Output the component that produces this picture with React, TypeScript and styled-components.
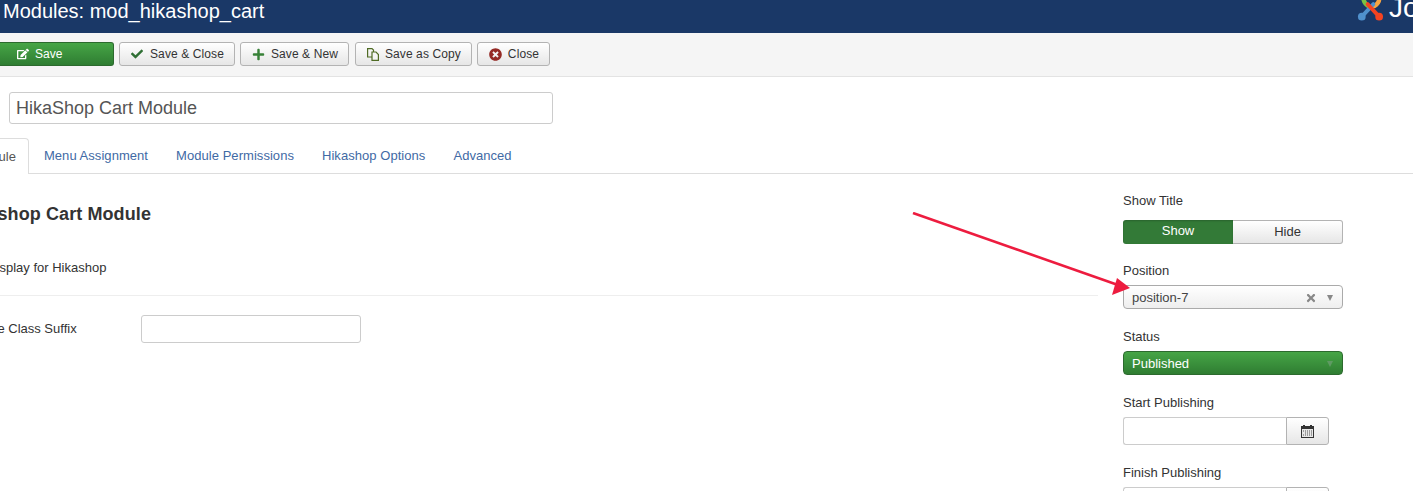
import React from 'react';
import styled, { createGlobalStyle, css } from 'styled-components';
import { FaCheck, FaEdit, FaPlus, FaTimes, FaTimesCircle } from 'react-icons/fa';

const GlobalStyle = createGlobalStyle`
  html, body {
    margin: 0;
    padding: 0;
    background: #fff;
    overflow: hidden;
  }
  body {
    font-family: "Liberation Sans", Arial, sans-serif;
    font-size: 13px;
    line-height: 18px;
    color: #333;
  }
`;

const JoomlaLogo = () => (
  <svg width="30" height="30" viewBox="0 0 30 30" fill="none" strokeWidth="4" strokeLinecap="round">
    <path d="M8 8 Q9 12 14 15" stroke="#7ac143" strokeWidth="4.5" />
    <path d="M24 7 Q24 11 19 14" stroke="#f9a541" strokeWidth="4.5" />
    <path d="M6 25 L18 12" stroke="#5091cd" />
    <path d="M12 12 L24 25" stroke="#f44321" />
    <circle cx="6" cy="25" r="4" fill="#5091cd" />
    <circle cx="24" cy="25" r="4" fill="#f44321" />
  </svg>
);

const CopyIcon = () => (
  <svg width="12" height="13" viewBox="0 0 12 13" fill="none" stroke="#4f6b24" strokeWidth="1.2">
    <path d="M0.6 0.6 H5 L6.5 2 V9 H0.6 Z" />
    <path d="M5 4 H9 L11.4 6.5 V12.4 H5 Z" fill="#f5f5f5" />
  </svg>
);

const CalendarIcon = () => (
  <svg width="13" height="13" viewBox="0 0 13 13">
    <rect x="0" y="1" width="13" height="12" fill="#333" />
    <rect x="2" y="0" width="2" height="2" fill="#333" />
    <rect x="9" y="0" width="2" height="2" fill="#333" />
    <rect x="1" y="4" width="11" height="8" fill="#e8e8e8" />
    <path d="M2 6h9M4 8h7M2 10h9" stroke="#555" strokeWidth="1" strokeDasharray="1 1" />
  </svg>
);

const Caret = styled.span<{ $tone?: string }>`
  width: 0;
  height: 0;
  border-left: 3.5px solid transparent;
  border-right: 3.5px solid transparent;
  border-top: 6px solid ${({ $tone }) => $tone || '#888'};
`;

const ArrowOverlay = () => (
  <Arrow width="230" height="90" viewBox="0 0 230 90">
    <path d="M1 1 L206 73" stroke="#ed1c3f" strokeWidth="2.6" />
    <path d="M218 76 L205 66 L200 83 Z" fill="#ed1c3f" />
  </Arrow>
);

export default function App() {
  return (
    <Page>
      <GlobalStyle />
      <Header>
        <Title>Modules: mod_hikashop_cart</Title>
        <Brand>
          <JoomlaLogo />
          <BrandText>Joomla!</BrandText>
        </Brand>
      </Header>

      <Toolbar>
        <SaveButton>
          <FaEdit size={12} />
          Save
        </SaveButton>
        <ToolButton>
          <FaCheck size={12} color="#2f6f34" />
          Save &amp; Close
        </ToolButton>
        <ToolButton $gap={6}>
          <FaPlus size={13} color="#378137" />
          Save &amp; New
        </ToolButton>
        <CopyButton $gap={6}>
          <CopyIcon />
          Save as Copy
        </CopyButton>
        <ToolButton $gap={6}>
          <FaTimesCircle size={13} color="#942a25" />
          Close
        </ToolButton>
      </Toolbar>

      <TitleField>HikaShop Cart Module</TitleField>

      <Tabs>
        <ActiveTab>Module</ActiveTab>
        <Tab>Menu Assignment</Tab>
        <Tab>Module Permissions</Tab>
        <Tab>Hikashop Options</Tab>
        <Tab>Advanced</Tab>
      </Tabs>

      <Content>
        <Main>
          <Heading>Hikashop Cart Module</Heading>
          <Description>Cart Display for Hikashop</Description>
          <Divider />
          <FieldRow>
            <FieldLabel>Module Class Suffix</FieldLabel>
            <TextInput />
          </FieldRow>
        </Main>

        <Side>
          <SideLabel>Show Title</SideLabel>
          <Toggle>
            <ToggleOn>Show</ToggleOn>
            <ToggleOff>Hide</ToggleOff>
          </Toggle>

          <SideLabel>Position</SideLabel>
          <SelectBox>
            <span>position-7</span>
            <SelectIcons>
              <FaTimes size={12} color="#888" />
              <Caret />
            </SelectIcons>
          </SelectBox>

          <SideLabel>Status</SideLabel>
          <SelectBox $green>
            <span>Published</span>
            <Caret $tone="#5f9a63" />
          </SelectBox>

          <SideLabel>Start Publishing</SideLabel>
          <DateRow>
            <DateInput />
            <DateButton>
              <CalendarIcon />
            </DateButton>
          </DateRow>

          <SideLabel>Finish Publishing</SideLabel>
          <DateRow>
            <DateInput />
            <DateButton>
              <CalendarIcon />
            </DateButton>
          </DateRow>
        </Side>
        <ArrowOverlay />
      </Content>
    </Page>
  );
}

const Page = styled.div`
  width: 1413px;
  height: 491px;
  overflow: hidden;
  position: relative;
`;

const Header = styled.header`
  height: 33px;
  background: #1a3867;
  display: flex;
  justify-content: space-between;
  overflow: hidden;
`;

const Title = styled.h1`
  margin: 0 0 0 3px;
  font-size: 20px;
  font-weight: normal;
  line-height: 22px;
  color: #fff;
`;

const Brand = styled.div`
  display: flex;
  gap: 4px;
  margin: -8px -74px 0 0;
  width: 131px;
`;

const BrandText = styled.span`
  color: #fff;
  font-size: 28px;
  line-height: 34px;
  margin-top: -1px;
`;

const Toolbar = styled.div`
  height: 43px;
  box-sizing: content-box;
  background: #f5f5f5;
  border-bottom: 1px solid #e3e3e3;
  display: flex;
  align-items: flex-start;
  gap: 5px;
  & > * {
    margin-top: 9px;
  }
`;

const buttonBase = css`
  height: 24px;
  box-sizing: border-box;
  display: flex;
  align-items: center;
  border-radius: 3px;
  font-size: 12px;
`;

const SaveButton = styled.div`
  ${buttonBase}
  width: 114px;
  gap: 6px;
  padding-left: 17px;
  color: #fff;
  background: linear-gradient(#46a546, #2f7d32);
  border: 1px solid #2c6a2e;
  border-left: none;
  border-radius: 0 3px 3px 0;
`;

const ToolButton = styled.div<{ $gap?: number }>`
  ${buttonBase}
  gap: ${({ $gap }) => $gap || 7}px;
  padding: 0 10px 0 11px;
  color: #333;
  background: linear-gradient(#fff, #e6e6e6);
  border: 1px solid #b3b3b3;
  letter-spacing: 0.1px;
`;

const CopyButton = styled(ToolButton)`
  margin-left: 1px;
`;

const TitleField = styled.div`
  margin: 15px 0 0 9px;
  width: 544px;
  height: 32px;
  box-sizing: border-box;
  border: 1px solid #ccc;
  border-radius: 3px;
  padding: 0 6px;
  font-size: 18px;
  line-height: 30px;
  color: #555;
`;

const Tabs = styled.nav`
  margin-top: 14px;
  height: 35px;
  display: flex;
  border-bottom: 1px solid #ddd;
`;

const Tab = styled.div`
  padding: 0 14px;
  line-height: 35px;
  letter-spacing: 0.05px;
  color: #3f6aa5;
`;

const ActiveTab = styled(Tab)`
  margin: 0 1px 0 -42px;
  height: 36px;
  box-sizing: border-box;
  padding: 0 12px 0 14px;
  color: #555;
  background: #fff;
  border: 1px solid #ddd;
  border-bottom: none;
  border-radius: 4px 4px 0 0;
`;

const Content = styled.div`
  position: relative;
  display: flex;
`;

const Main = styled.div`
  width: 1139px;
  margin-left: -41px;
  flex-shrink: 0;
  padding-top: 30px;
`;

const Heading = styled.h2`
  margin: 0;
  font-size: 18px;
  line-height: 20px;
  letter-spacing: 0.1px;
  color: #333;
`;

const Description = styled.p`
  margin: 35px 0 0;
  line-height: 18px;
`;

const Divider = styled.hr`
  margin: 18px 0 19px;
  border: none;
  border-top: 1px solid #eee;
`;

const FieldRow = styled.div`
  display: flex;
  align-items: center;
`;

const FieldLabel = styled.label`
  width: 182px;
  padding-left: 3px;
  box-sizing: border-box;
`;

const TextInput = styled.div`
  width: 220px;
  height: 28px;
  box-sizing: border-box;
  border: 1px solid #ccc;
  border-radius: 3px;
`;

const Side = styled.aside`
  margin-left: 25px;
  padding-top: 18px;
  width: 220px;
  flex-shrink: 0;
`;

const SideLabel = styled.div`
  line-height: 18px;
  margin-bottom: 5px;
  &:not(:first-child) {
    margin-top: 19px;
  }
`;

const Toggle = styled.div`
  display: flex;
  height: 24px;
  margin: 10px 0 -1px;
  text-align: center;
  line-height: 22px;
`;

const ToggleOn = styled.div`
  width: 110px;
  color: #fff;
  background: #337a37;
  border-radius: 3px 0 0 3px;
  box-shadow: inset 0 1px 2px rgba(0, 0, 0, 0.2);
`;

const ToggleOff = styled.div`
  width: 110px;
  box-sizing: border-box;
  background: linear-gradient(#fff, #e6e6e6);
  border: 1px solid #b3b3b3;
  border-left: none;
  border-radius: 0 3px 3px 0;
`;

const SelectBox = styled.div<{ $green?: boolean }>`
  height: 24px;
  box-sizing: border-box;
  display: flex;
  align-items: center;
  justify-content: space-between;
  padding: 1px 9px 0 8px;
  border-radius: 4px;
  ${({ $green }) =>
    $green
      ? css`
          color: #fff;
          background: linear-gradient(#46a546, #2f7d32);
          border: 1px solid #2c6a2e;
        `
      : css`
          color: #444;
          background: linear-gradient(#fff, #eee);
          border: 1px solid #aaa;
        `}
`;

const SelectIcons = styled.div`
  display: flex;
  align-items: center;
  gap: 10px;
`;

const DateRow = styled.div`
  display: flex;
  width: 206px;
  height: 28px;
`;

const DateInput = styled.div`
  flex: 1;
  box-sizing: border-box;
  border: 1px solid #ccc;
  border-right: none;
  border-radius: 3px 0 0 3px;
`;

const DateButton = styled.div`
  width: 43px;
  box-sizing: border-box;
  display: flex;
  align-items: center;
  justify-content: center;
  background: linear-gradient(#fff, #e6e6e6);
  border: 1px solid #b3b3b3;
  border-radius: 0 3px 3px 0;
`;

const Arrow = styled.svg`
  position: absolute;
  left: 912px;
  top: 38px;
`;
